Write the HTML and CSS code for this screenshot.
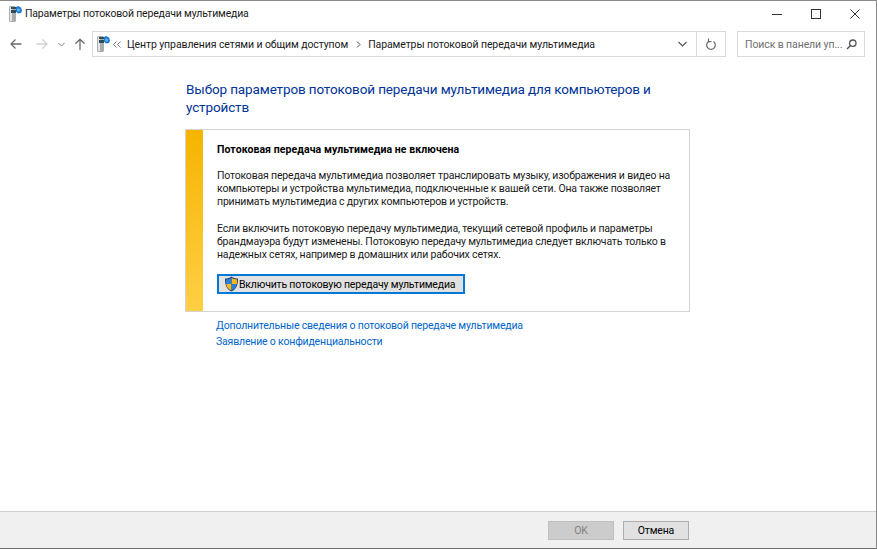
FILE: index.html
```html
<!DOCTYPE html>
<html lang="ru">
<head>
<meta charset="utf-8">
<title>Параметры потоковой передачи мультимедиа</title>
<link rel="stylesheet" href="styles.css">
</head>
<body>
<div class="window">
  <header class="titlebar">
    <svg class="app-icon" width="16" height="18" viewBox="0 0 16 18"><rect x="1" y="1" width="7" height="16" rx="1.5" fill="#a9adb0"/><rect x="2" y="2" width="2" height="14" fill="#e4e6e8"/><rect x="3" y="2" width="5" height="2" fill="#2f4c58"/><rect x="3" y="5" width="5" height="3" fill="#2f4c58"/><path d="M8 2l2-1 3 1.500 1 3-1 2.500-3 .5-2-2z" fill="#1f78d1"/><circle cx="10.500" cy="5" r="1.500" fill="#5fc0f0"/></svg>
    <span class="title">Параметры потоковой передачи мультимедиа</span>
    <div class="window-controls">
      <svg width="10" height="10" viewBox="0 0 10 10"><path d="M0 5.5h10" stroke="#333" fill="none"/></svg>
      <svg width="10" height="10" viewBox="0 0 10 10"><rect x=".5" y=".5" width="9" height="9" stroke="#333" fill="none"/></svg>
      <svg width="10" height="10" viewBox="0 0 10 10"><path d="M.5.5l9 9M9.5.5l-9 9" stroke="#333" fill="none"/></svg>
    </div>
  </header>
  <nav class="navbar">
    <div class="nav-buttons">
      <svg width="12" height="12" viewBox="0 0 12 12"><path d="M11.5 6H1M5.5 1.5L1 6l4.500 4.500" stroke="#6d6d6d" stroke-width="1.300" fill="none"/></svg>
      <svg class="nav-forward" width="12" height="12" viewBox="0 0 12 12"><path d="M.5 6H11M6.500 1.500L11 6l-4.500 4.500" stroke="#d0d0d0" stroke-width="1.300" fill="none"/></svg>
      <svg class="nav-down" width="7" height="5" viewBox="0 0 7 5"><path d="M.5 1l3 3 3-3" stroke="#808080" fill="none"/></svg>
      <svg class="nav-up" width="12" height="12" viewBox="0 0 12 12"><path d="M6 12V1.200M1.500 5.700L6 1.200l4.500 4.500" stroke="#6d6d6d" stroke-width="1.300" fill="none"/></svg>
    </div>
    <div class="address">
      <svg class="addr-icon" width="16" height="18" viewBox="0 0 16 18"><rect x="1" y="1" width="7" height="16" rx="1.500" fill="#a9adb0"/><rect x="2" y="2" width="2" height="14" fill="#e4e6e8"/><rect x="3" y="2" width="5" height="2" fill="#2f4c58"/><rect x="3" y="5" width="5" height="3" fill="#2f4c58"/><path d="M8 2l2-1 3 1.500 1 3-1 2.500-3 .5-2-2z" fill="#1f78d1"/><circle cx="10.500" cy="5" r="1.500" fill="#5fc0f0"/></svg>
      <svg class="crumb-more" width="8" height="7" viewBox="0 0 8 7"><path d="M3.500.5l-3 3 3 3M7.500.5l-3 3 3 3" stroke="#777" fill="none"/></svg>
      <span class="crumb">Центр управления сетями и общим доступом</span>
      <svg class="crumb-sep" width="5" height="7" viewBox="0 0 5 7"><path d="M1 .5l3 3-3 3" stroke="#444" fill="none"/></svg>
      <span class="crumb">Параметры потоковой передачи мультимедиа</span>
      <span class="addr-spacer"></span>
      <span class="addr-drop"><svg width="9" height="6" viewBox="0 0 9 6"><path d="M.5 1l4 4 4-4" stroke="#555" stroke-width="1.200" fill="none"/></svg></span>
      <span class="addr-refresh"><svg width="12" height="13" viewBox="0 0 12 13"><path d="M3.500 3.500a4.300 4.300 0 1 0 5 0" stroke="#6d6d6d" stroke-width="1.200" fill="none"/><path d="M3.500 .5v3.200h3" stroke="#6d6d6d" stroke-width="1.200" fill="none"/></svg></span>
    </div>
    <div class="search">
      <span class="search-text">Поиск в панели уп...</span>
      <svg width="11" height="11" viewBox="0 0 11 11"><circle cx="6.800" cy="4.200" r="3.200" stroke="#555" stroke-width="1.300" fill="none"/><path d="M4.500 6.500L1 10" stroke="#555" stroke-width="1.500" fill="none"/></svg>
    </div>
  </nav>
  <main class="content">
    <h1 class="heading">Выбор параметров потоковой передачи мультимедиа для компьютеров и устройств</h1>
    <section class="panel">
      <div class="panel-stripe"></div>
      <div class="panel-body">
        <h2 class="panel-title">Потоковая передача мультимедиа не включена</h2>
        <p class="panel-text">Потоковая передача мультимедиа позволяет транслировать музыку, изображения и видео на компьютеры и устройства мультимедиа, подключенные к вашей сети. Она также позволяет принимать мультимедиа с других компьютеров и устройств.</p>
        <p class="panel-text">Если включить потоковую передачу мультимедиа, текущий сетевой профиль и параметры брандмауэра будут изменены. Потоковую передачу мультимедиа следует включать только в надежных сетях, например в домашних или рабочих сетях.</p>
        <button class="enable-btn" type="button">
          <svg class="shield" width="15" height="16" viewBox="0 0 15 16"><path d="M7.500.5C5.500 2 3.500 2.500 1 2.500c0 6 1 10.500 6.500 13C13 13 14 8.500 14 2.500 11.500 2.500 9.500 2 7.500.5z" fill="#1f3f6e"/><path d="M7.500 1.800V8H2.200c.3 2.800 1.700 4.900 5.300 6.400V8h5.300c.2-1.500.2-2.900.2-4.600-2 0-3.800-.5-5.500-1.600z" fill="#f5b81f"/><path d="M7.500 1.800C5.800 2.900 4 3.400 2 3.400c0 1.700 0 3.100.2 4.600h5.300zM7.500 8v6.400c3.600-1.500 5-3.600 5.300-6.400z" fill="#2a7fd8"/></svg>
          <span>Включить потоковую передачу мультимедиа</span>
        </button>
      </div>
    </section>
    <ul class="links">
      <li><a class="link" href="#">Дополнительные сведения о потоковой передаче мультимедиа</a></li>
      <li><a class="link" href="#">Заявление о конфиденциальности</a></li>
    </ul>
  </main>
  <footer class="footer">
    <button class="footer-btn is-disabled" type="button" disabled>OK</button>
    <button class="footer-btn" type="button">Отмена</button>
  </footer>
</div>
</body>
</html>
```

FILE: styles.css
```css
* { box-sizing: border-box; }
html, body { margin: 0; height: 100%; }
body { font-family: Roboto, "Noto Sans", "Liberation Sans", sans-serif; font-size: 10.5px; letter-spacing: -0.18px; background: #fff; color: #000; overflow: hidden; }
.window { width: 877px; height: 549px; display: flex; flex-direction: column; background: #fff; border-top: 1px solid #8a8a8a; border-right: 1px solid #8a8a8a; border-bottom: 1px solid #6f6f6f; }
.titlebar { height: 25px; display: flex; align-items: center; padding-left: 8px; flex: none; }
.app-icon { flex: none; }
.title { margin-left: 1px; color: #1a1a1a; white-space: nowrap; }
.window-controls { margin-left: auto; display: flex; gap: 29px; padding-right: 16px; align-items: center; }
.navbar { height: 34px; flex: none; display: flex; align-items: center; padding-top: 2px; }
.nav-buttons { width: 92px; display: flex; align-items: center; padding-left: 10px; flex: none; }
.nav-forward { margin-left: 14px; }
.nav-down { margin-left: 10px; }
.nav-up { margin-left: 9px; }
.address { width: 634px; height: 26px; border: 1px solid #d9d9d9; display: flex; align-items: center; padding-left: 3px; flex: none; }
.addr-icon { flex: none; }
.crumb-more { margin: 0 6px 0 1px; flex: none; }
.crumb { color: #1a1a1a; white-space: nowrap; letter-spacing: -0.1px; }
.crumb-sep { margin: 0 7px 0 8px; flex: none; }
.addr-spacer { flex: 1; }
.addr-drop { width: 28px; height: 100%; display: flex; align-items: center; justify-content: center; border-right: 1px solid #d9d9d9; }
.addr-refresh { width: 28px; display: flex; align-items: center; justify-content: center; }
.search { width: 128px; height: 26px; margin-left: 11px; border: 1px solid #d9d9d9; display: flex; align-items: center; justify-content: space-between; padding: 0 7px; flex: none; }
.search-text { color: #6d6d6d; white-space: nowrap; letter-spacing: -0.1px; }
.content { flex: 1; padding: 20px 0 0 186px; min-height: 0; }
.heading { margin: 0; width: 470px; font-size: 13.5px; letter-spacing: -0.13px; font-weight: 400; line-height: 18px; color: #003399; }
.panel { width: 505px; height: 183px; margin-top: 13px; margin-left: -1px; display: flex; border: 1px solid #d4d4d4; }
.panel-stripe { width: 17px; background: linear-gradient(#f5b400, #ffcf45); flex: none; }
.panel-body { flex: 1; padding: 12px 0 0 14px; }
.panel-title { margin: 0 0 12px; font-size: 10.5px; letter-spacing: 0.08px; line-height: 15px; font-weight: 700; color: #000; }
.panel-text { margin: 0 0 14px; width: 455px; line-height: 13px; color: #1a1a1a; }
.enable-btn { width: 248px; height: 20px; margin-top: -1px; padding: 0 0 0 6px; display: flex; align-items: center; background: #e1e1e1; border: 1px solid #0078d7; outline: 1px solid #0078d7; outline-offset: -2px; font: inherit; letter-spacing: inherit; color: #000; white-space: nowrap; }
.shield { flex: none; }
.links { list-style: none; margin: 6px 0 0 30px; padding: 0; }
.links li { height: 16px; line-height: 15px; }
.link { color: #0066cc; text-decoration: none; white-space: nowrap; }
.footer { height: 37px; flex: none; display: flex; justify-content: flex-end; align-items: center; gap: 9px; padding-right: 187px; background: #f0f0f0; border-top: 1px solid #d0d0d0; }
.footer-btn { width: 66px; height: 19px; padding: 0; background: #e1e1e1; border: 1px solid #adadad; font: inherit; letter-spacing: inherit; color: #000; }
.footer-btn.is-disabled { background: #cccccc; border-color: #bfbfbf; color: #838383; }
```
